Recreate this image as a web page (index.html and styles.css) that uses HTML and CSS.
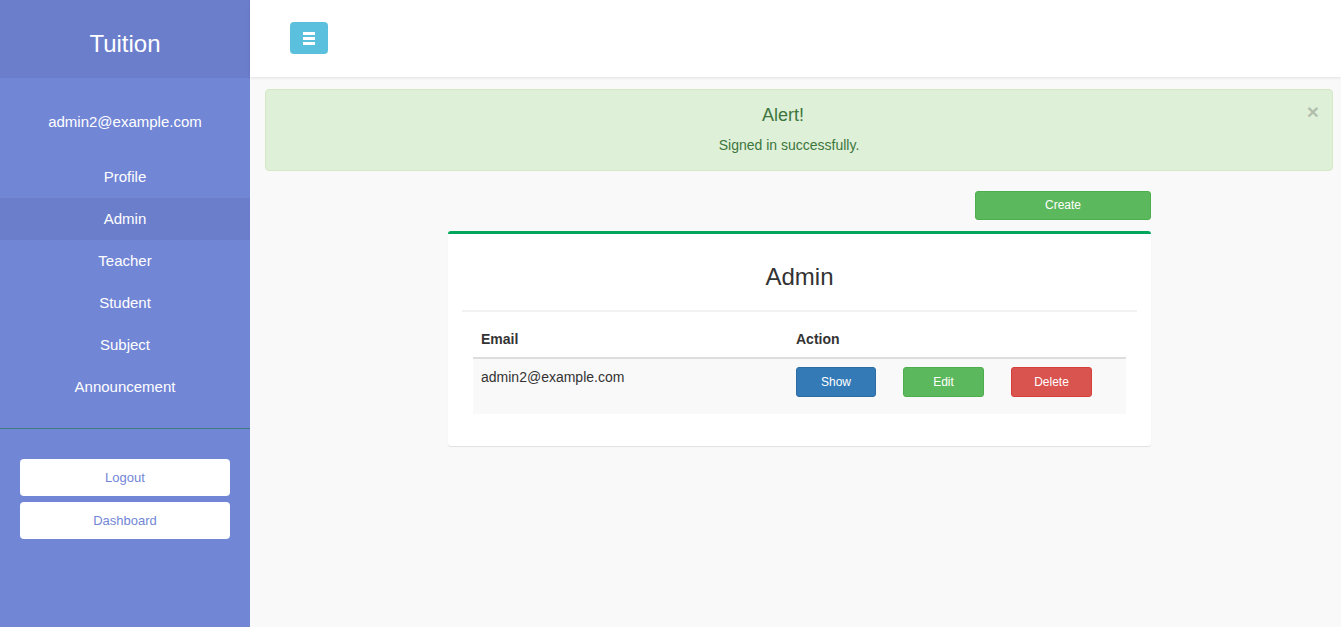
FILE: index.html
```html
<!DOCTYPE html>
<html>
<head>
<meta charset="utf-8">
<link rel="stylesheet" href="styles.css">
</head>
<body>
<div class="layout">
  <aside class="sidebar">
    <div class="brand">Tuition</div>
    <div class="user">admin2@example.com</div>
    <nav class="nav">
      <a class="nav-item">Profile</a>
      <a class="nav-item active">Admin</a>
      <a class="nav-item">Teacher</a>
      <a class="nav-item">Student</a>
      <a class="nav-item">Subject</a>
      <a class="nav-item">Announcement</a>
    </nav>
    <div class="divider"></div>
    <div class="side-buttons">
      <a class="side-btn">Logout</a>
      <a class="side-btn">Dashboard</a>
    </div>
  </aside>
  <div class="main">
    <header class="topbar">
      <button class="toggle"><span class="bar"></span><span class="bar"></span><span class="bar"></span></button>
    </header>
    <div class="content">
      <div class="alert">
        <span class="close">×</span>
        <h4 class="alert-title">Alert!</h4>
        <div class="alert-text">Signed in successfully.</div>
      </div>
      <div class="panel-wrap">
        <div class="create-row"><a class="btn btn-success create">Create</a></div>
        <div class="card">
          <h3 class="card-title">Admin</h3>
          <div class="hr"></div>
          <table class="table">
            <thead>
              <tr><th class="col-email">Email</th><th>Action</th></tr>
            </thead>
            <tbody>
              <tr>
                <td class="col-email">admin2@example.com</td>
                <td><div class="actions"><a class="btn btn-primary">Show</a><a class="btn btn-success">Edit</a><a class="btn btn-danger">Delete</a></div></td>
              </tr>
            </tbody>
          </table>
        </div>
      </div>
    </div>
  </div>
</div>
</body>
</html>
```

FILE: styles.css
```css
* { box-sizing: border-box; }
html, body { margin: 0; padding: 0; height: 100%; }
body {
  font-family: "Liberation Sans", Arial, sans-serif;
  font-size: 14px;
  color: #333;
  background: #f9f9f9;
}
.layout { display: flex; min-height: 627px; }
.sidebar {
  width: 250px;
  flex: 0 0 250px;
  background: #7286d6;
  color: #fff;
  display: flex;
  flex-direction: column;
}
.brand {
  height: 78px;
  background: #6b7ecc;
  display: flex;
  align-items: center;
  justify-content: center;
  font-size: 24px;
  padding-top: 10px;
}
.user {
  text-align: center;
  font-size: 15px;
  height: 42px;
  line-height: 42px;
  margin-top: 23px;
}
.nav { display: flex; flex-direction: column; margin-top: 13px; }
.nav-item {
  display: block;
  height: 42px;
  line-height: 42px;
  text-align: center;
  font-size: 15px;
  color: #fff;
}
.nav-item.active { background: #6b7ecc; }
.divider {
  height: 1px;
  background: #3f7a80;
  margin-top: 20px;
}
.side-buttons {
  display: flex;
  flex-direction: column;
  gap: 6px;
  padding: 30px 20px 0;
}
.side-btn {
  display: block;
  background: #fff;
  border-radius: 4px;
  height: 37px;
  line-height: 37px;
  text-align: center;
  color: #7286d6;
  font-size: 13px;
}
.main { flex: 1; display: flex; flex-direction: column; }
.topbar {
  height: 77px;
  background: #fff;
  box-shadow: 0 1px 3px rgba(0,0,0,0.1);
  padding: 22px 40px;
  position: relative;
  z-index: 1;
}
.toggle {
  width: 38px;
  height: 32px;
  background: #5bc0de;
  border: none;
  border-radius: 4px;
  padding: 0;
  display: flex;
  flex-direction: column;
  align-items: center;
  justify-content: center;
  gap: 2px;
}
.bar { display: block; width: 12px; height: 3px; background: #fff; }
.content { padding: 12px 8px 0 15px; }
.alert {
  position: relative;
  background: #dff0d8;
  border: 1px solid #d6e9c6;
  border-radius: 4px;
  color: #3c763d;
  text-align: center;
  padding: 14px 35px 14px 15px;
  height: 82px;
}
.close {
  position: absolute;
  right: 13px;
  top: 11px;
  font-size: 21px;
  font-weight: bold;
  line-height: 1;
  color: #000;
  opacity: 0.2;
}
.alert-title {
  margin: 0 12px 9px 0;
  font-size: 18px;
  font-weight: normal;
  line-height: 22px;
}
.alert-text { font-size: 14px; line-height: 20px; }
.panel-wrap {
  width: 703px;
  margin: 20px 0 0 183px;
}
.create-row { display: flex; justify-content: flex-end; margin-bottom: 11px; }
.btn {
  display: inline-block;
  color: #fff;
  font-size: 12px;
  text-align: center;
  border-radius: 3px;
  border: 1px solid transparent;
}
.create {
  width: 176px;
  height: 29px;
  line-height: 27px;
}
.btn-success { background: #5cb85c; border-color: #4cae4c; }
.btn-primary { background: #337ab7; border-color: #2e6da4; }
.btn-danger { background: #d9534f; border-color: #d43f3a; }
.card {
  background: #fff;
  border-top: 3px solid #00a65a;
  border-radius: 3px;
  box-shadow: 0 1px 1px rgba(0,0,0,0.1);
  padding: 0 14px 32px;
}
.card-title {
  margin: 0;
  text-align: center;
  font-size: 24px;
  font-weight: normal;
  line-height: 28px;
  padding-top: 29px;
  height: 76px;
}
.hr { height: 2px; background: #f2f2f2; }
.table {
  border-collapse: collapse;
  margin: 9px 10px 0 11px;
  width: 653px;
}
.table th {
  text-align: left;
  font-weight: bold;
  padding: 8px;
  line-height: 20px;
  border-bottom: 2px solid #ddd;
}
.table td {
  text-align: left;
  vertical-align: top;
  padding: 8px 8px 17px;
  line-height: 20px;
  background: #f9f9f9;
}
.col-email { width: 315px; }
.actions { display: flex; gap: 27px; }
.actions .btn { width: 80px; height: 30px; line-height: 28px; }
.actions .btn + .btn { width: 81px; }
```
